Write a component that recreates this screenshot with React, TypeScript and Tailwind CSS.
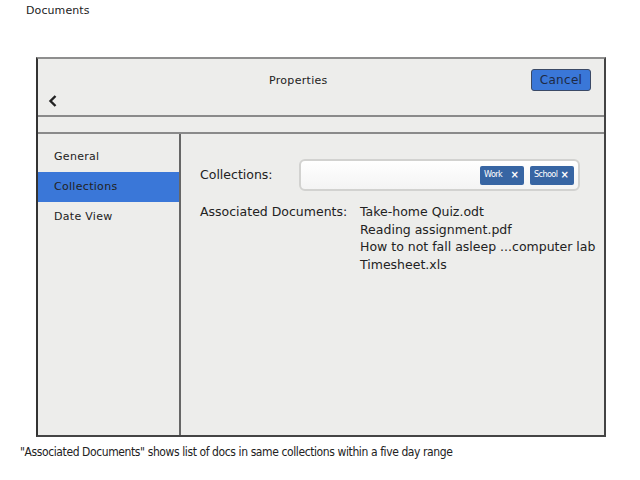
import React from "react";

const docs = [
  "Take-home Quiz.odt",
  "Reading assignment.pdf",
  "How to not fall asleep ...computer lab",
  "Timesheet.xls",
];

function Tag({ label }: { label: string }) {
  return (
    <div className="flex h-[19px] w-[44px] items-center justify-between rounded-[2px] bg-[#3765a3] pl-[4px] pr-[5px] text-white">
      <span className="text-[9px] tracking-[-0.6px] [font-family:'DejaVu_Sans_Condensed','DejaVu_Sans',sans-serif]">{label}</span>
      <span className="text-[10px] font-bold leading-none">×</span>
    </div>
  );
}

export default function App() {
  return (
    <div className="relative h-[480px] w-[640px] overflow-hidden bg-white text-[#222] [font-family:'DejaVu_Sans',sans-serif]">
      <div className="pl-[26px] pt-[4px] text-[11px] leading-[14px] tracking-[0.1px]">Documents</div>
      <div className="ml-[36px] mt-[39px] flex h-[380px] w-[570px] flex-col border-b-2 border-l-2 border-r-2 border-t-2 border-b-[#444] border-l-[#333] border-r-[#444] border-t-[#8e8e8e] bg-[#ededeb]">
        <div className="relative h-[58px] shrink-0 border-b-2 border-[#8a8a8a]">
          <div className="absolute left-[231px] top-[14px] text-[11px] tracking-[0.3px]">Properties</div>
          <svg className="absolute left-[10px] top-[36px]" width="10" height="12" viewBox="0 0 10 12">
            <path d="M7.5 1 L2.5 6 L7.5 11" fill="none" stroke="#222" strokeWidth="2.4" />
          </svg>
          <button className="absolute right-[13px] top-[10px] h-[22px] w-[60px] rounded-[3px] border border-[#3b4a66] bg-[#3a77d8] text-[12px] tracking-[0.3px] text-[#1e2a44]">
            Cancel
          </button>
        </div>
        <div className="h-[17px] shrink-0 border-b-2 border-[#8a8a8a]" />
        <div className="flex min-h-0 flex-1">
          <div className="w-[143px] shrink-0 border-r-2 border-[#666] pt-[9px] text-[11px] tracking-[0.3px]">
            <div className="flex h-[29px] items-center pl-[16px]">General</div>
            <div className="flex h-[30px] items-center bg-[#3a77d8] pl-[16px]">Collections</div>
            <div className="flex h-[30px] items-center pl-[16px]">Date View</div>
          </div>
          <div className="flex-1 whitespace-nowrap pl-[19px] pt-[25px] text-[12.5px]">
            <div className="flex items-center">
              <div className="w-[99px]">Collections:</div>
              <div className="flex h-[32px] w-[281px] items-center justify-end gap-[6px] rounded-[6px] border-2 border-[#d2d2d0] bg-gradient-to-b from-[#ffffff] to-[#f4f4f4] pr-[4px]">
                <Tag label="Work" />
                <Tag label="School" />
              </div>
            </div>
            <div className="mt-[12px] flex">
              <div className="w-[160px] leading-[18px]">Associated Documents:</div>
              <div className="leading-[17.7px]">
                {docs.map((d) => (
                  <div key={d}>{d}</div>
                ))}
              </div>
            </div>
          </div>
        </div>
      </div>
      <div className="pl-[20px] pt-[8px] text-[12px] leading-[14px] tracking-[-0.4px] [font-family:'DejaVu_Sans_Condensed','DejaVu_Sans',sans-serif] [font-stretch:condensed]">
        "Associated Documents" shows list of docs in same collections within a five day range
      </div>
    </div>
  );
}
